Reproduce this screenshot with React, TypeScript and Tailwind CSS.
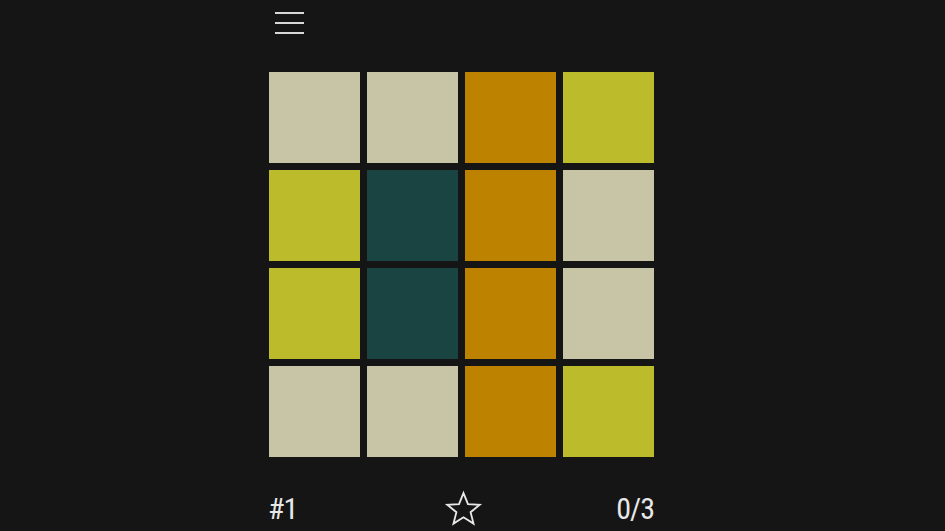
import React from "react";

const C = { b: "bg-[#c8c4a6]", g: "bg-[#194442]", o: "bg-[#bd8200]", y: "bg-[#bbbb2b]" };
const rows: (keyof typeof C)[][] = [
  ["b", "b", "o", "y"],
  ["y", "g", "o", "b"],
  ["y", "g", "o", "b"],
  ["b", "b", "o", "y"],
];

export default function App() {
  return (
    <div className="min-h-[531px] w-full bg-[#151515] text-[#e8e8e8]" style={{ fontFamily: '"Roboto Condensed", "Liberation Sans Narrow", "Arial Narrow", Roboto, sans-serif' }}>
      <div className="ml-[269px] w-[385px] pt-[12px]">
        <div className="ml-[6px] flex w-[29px] flex-col gap-[8px]">
          <div className="h-[2px] bg-[#d8d8d8]" />
          <div className="h-[2px] bg-[#d8d8d8]" />
          <div className="h-[2px] bg-[#d8d8d8]" />
        </div>
        <div className="mt-[38px] grid grid-cols-4 gap-[7px]">
          {rows.flat().map((c, i) => (
            <div key={i} className={`h-[91px] w-[91px] ${C[c]}`} />
          ))}
        </div>
        <div className="mt-[33px] flex items-center justify-between text-[30px] font-normal leading-[34px] tracking-[-1px]">
          <span className="-ml-[1px]">#1</span>
          <svg width="39" height="37" viewBox="0 0 24 24" fill="none" stroke="#e8e8e8" strokeWidth="1.2" strokeLinejoin="miter" className="ml-[14px]">
            <polygon points="12,2 14.9,9.2 22.5,9.6 16.6,14.4 18.5,21.8 12,17.7 5.5,21.8 7.4,14.4 1.5,9.6 9.1,9.2" />
          </svg>
          <span>0/3</span>
        </div>
      </div>
    </div>
  );
}
